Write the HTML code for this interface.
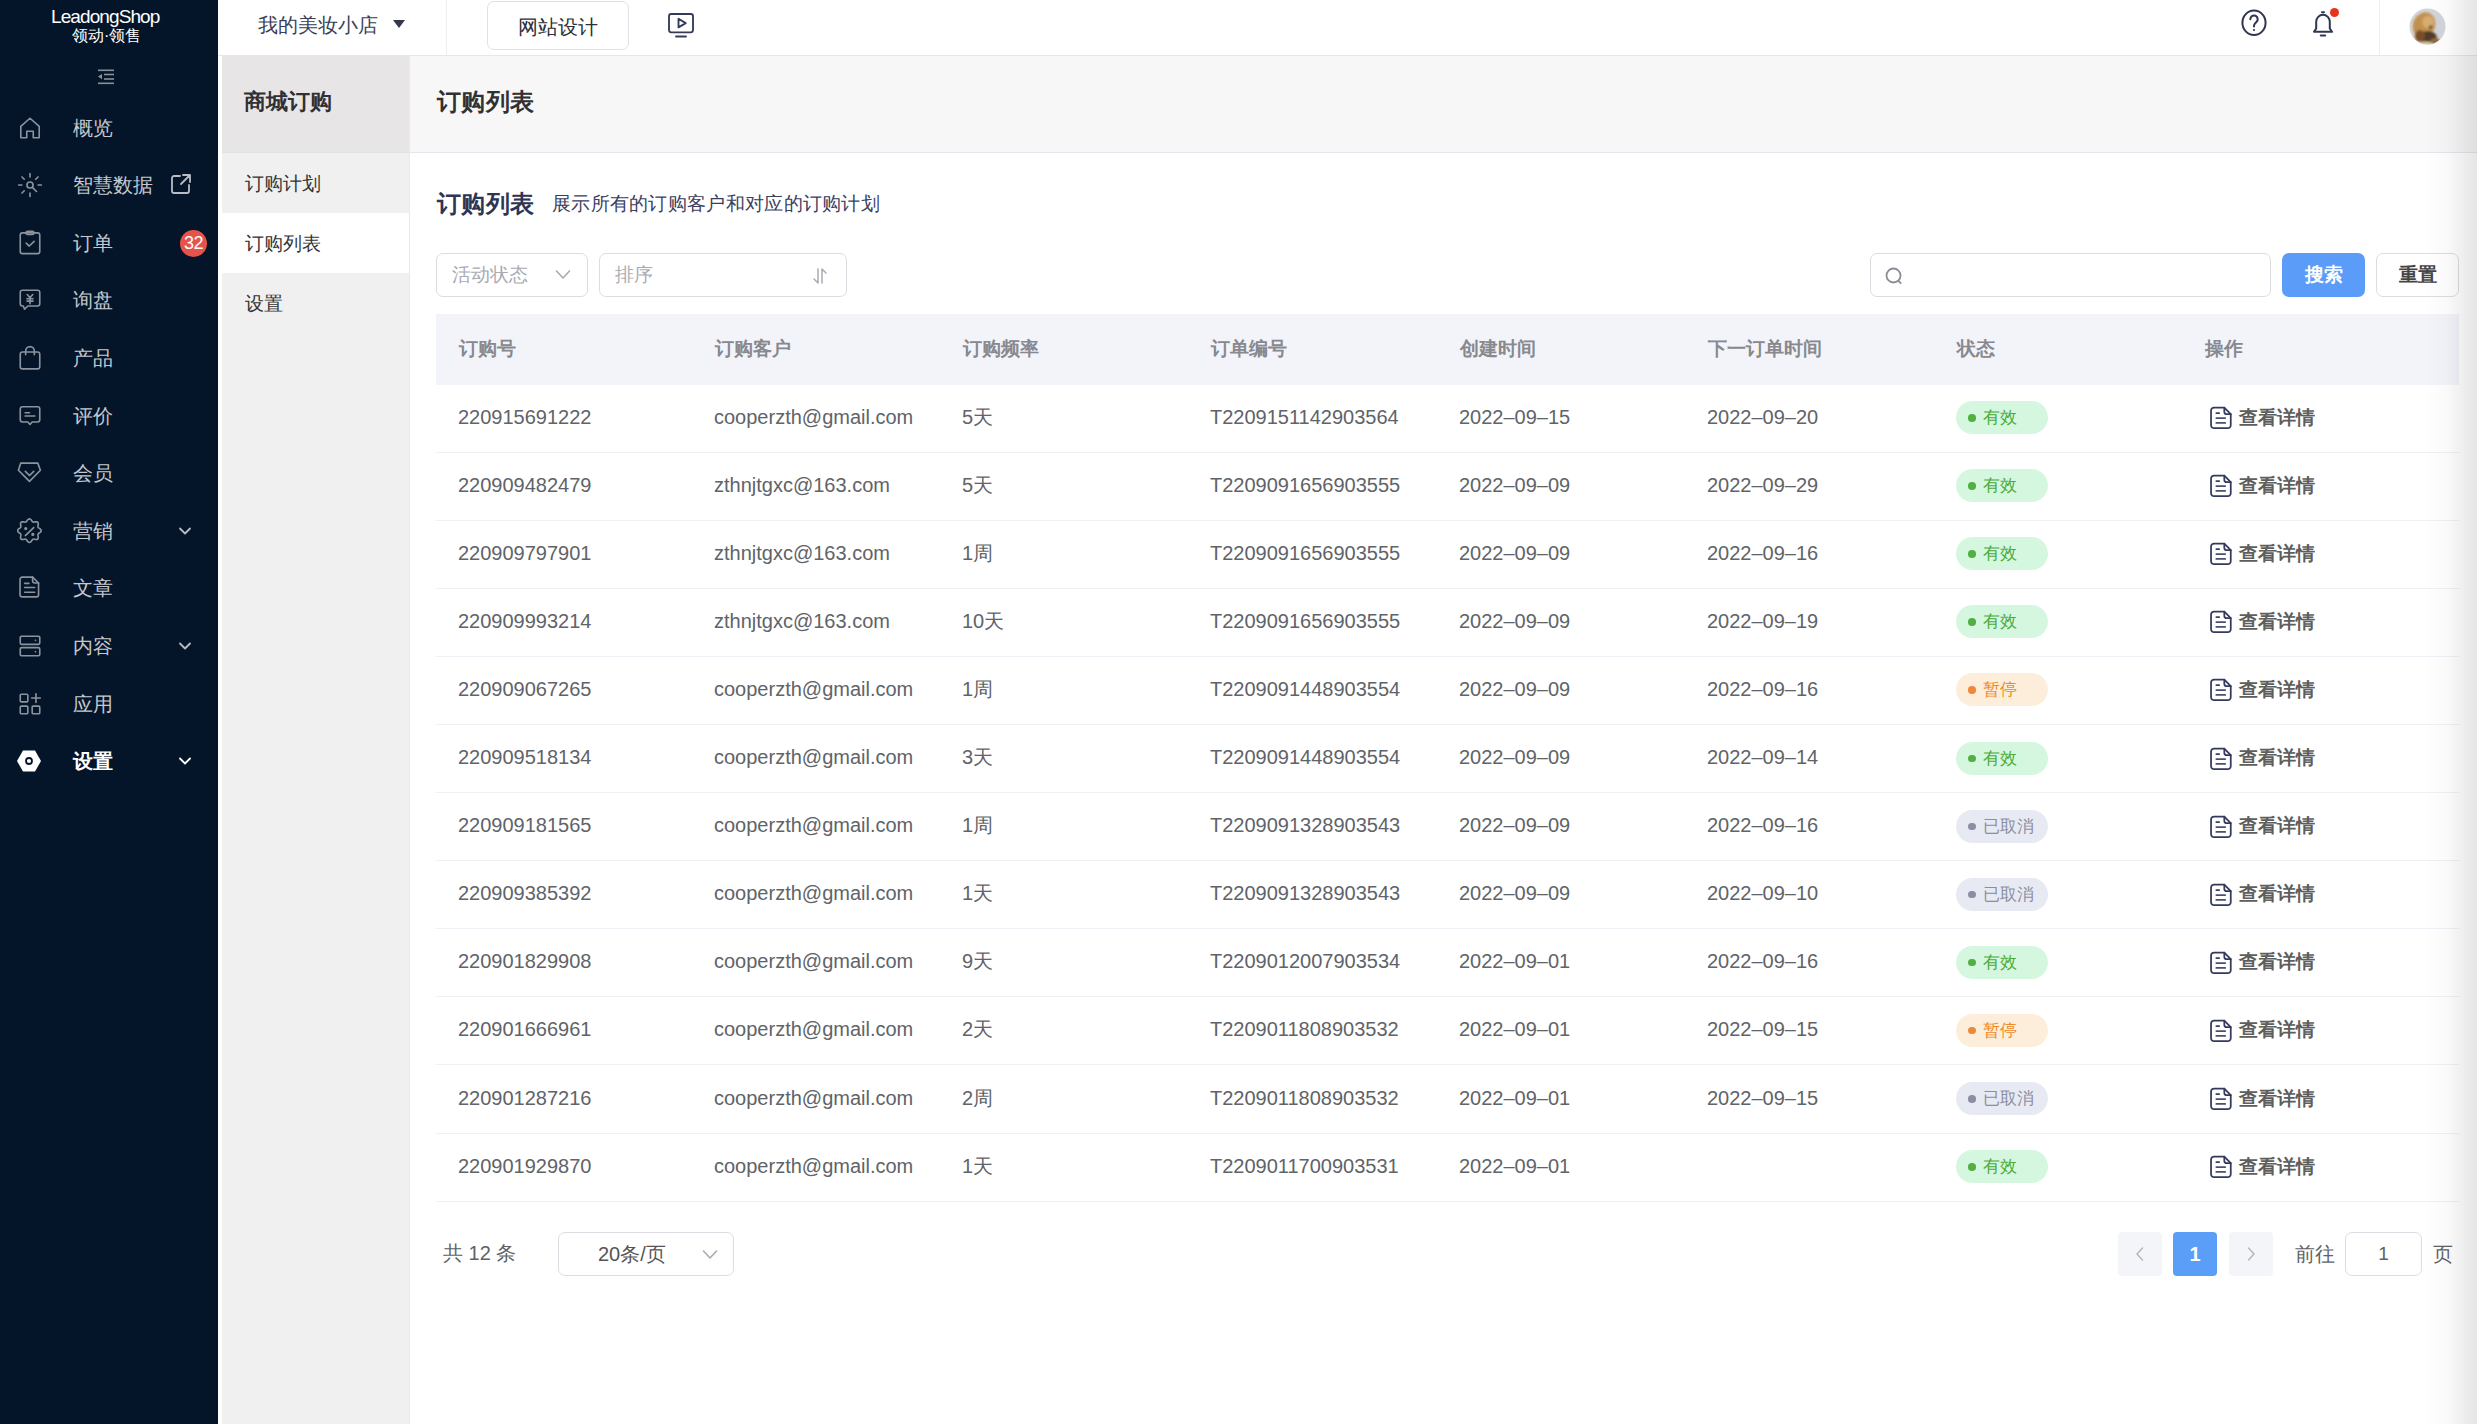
<!DOCTYPE html>
<html><head><meta charset="utf-8">
<style>
*{box-sizing:border-box;margin:0;padding:0}
html,body{width:2484px;height:1424px;overflow:hidden;background:#fff;font-family:"Liberation Sans",sans-serif;}
.abs{position:absolute}
#side{position:absolute;left:0;top:0;width:218px;height:1424px;background:#041529;}
#logo1{position:absolute;left:51px;top:5px;color:#fff;font-size:19px;letter-spacing:-0.9px;line-height:24px;white-space:nowrap}
#logo2{position:absolute;left:72px;top:26px;color:#fff;font-size:16px;line-height:20px;white-space:nowrap}
#collapse{position:absolute;left:97px;top:69px}
.mi{position:absolute;left:0;width:218px;height:40px;}
.mi .ic{position:absolute;left:17px;top:7px;width:26px;height:26px}
.mi .lb{position:absolute;left:73px;top:0;line-height:40px;font-size:20px;color:#c5c8ce;white-space:nowrap}
.mi.act .lb{color:#fff;font-weight:bold}
.mi.act .ic{left:16px;top:7px}
.mi .ext{position:absolute;left:169px;top:7px}
.mi .badge{position:absolute;left:180px;top:7px;width:27px;height:27px;border-radius:50%;background:#e5534b;color:#fff;font-size:18px;line-height:27px;text-align:center;letter-spacing:-0.5px}
.mi .chev{position:absolute;left:177px;top:12px}
#top{position:absolute;left:218px;top:0;width:2266px;height:56px;background:#fff;border-bottom:1px solid #e6e7ec}
#shop{position:absolute;left:258px;top:9px;font-size:20px;line-height:32px;color:#3a3f55;white-space:nowrap}
#shoptri{position:absolute;left:393px;top:20px;width:0;height:0;border-left:6px solid transparent;border-right:6px solid transparent;border-top:8px solid #33384f}
#div1{position:absolute;left:446px;top:0;width:1px;height:55px;background:#eceef2}
#design{position:absolute;left:487px;top:1px;width:142px;height:49px;border:1px solid #dfe1e8;border-radius:7px;font-size:20px;line-height:50px;text-align:center;color:#2b2f3a}
#tv{position:absolute;left:666px;top:11px}
#help{position:absolute;left:2239px;top:8px}
#bell{position:absolute;left:2309px;top:8px}
#reddot{position:absolute;left:2330px;top:8px;width:9px;height:9px;border-radius:50%;background:#e8321e}
#div2{position:absolute;left:2379px;top:0;width:1px;height:55px;background:#eceef2}
#avatar{position:absolute;left:2410px;top:8px;width:36px;height:36px;border-radius:50%;background:radial-gradient(circle at 55% 45%,#c99a52 0%,#a87434 35%,#6d4a26 60%,#c4b8a8 85%);}
#sub{position:absolute;left:222px;top:56px;width:188px;height:1368px;background:#f0f0f0;border-right:1px solid #e9eaef}
#subhead{position:absolute;left:0;top:0;width:187px;height:97px;background:#e7e5e6;border-bottom:1px solid #e1e2e8}
#subhead span{position:absolute;left:22px;top:28px;font-size:22px;line-height:36px;font-weight:bold;color:#2f3033}
.si{position:absolute;left:0;width:187px;height:60px;font-size:19px;line-height:62px;color:#333;padding-left:23px}
#sw{position:absolute;left:218px;top:56px;width:4px;height:1368px;background:#fff}
#phead{position:absolute;left:410px;top:56px;width:2074px;height:97px;background:#f7f7f7;border-bottom:1px solid #e4e6ee}
#phead span{position:absolute;left:26.5px;top:28px;font-size:24px;line-height:36px;font-weight:bold;color:#303133;letter-spacing:0.6px}
#ctitle{position:absolute;left:436.5px;top:186px;font-size:24px;line-height:36px;font-weight:bold;color:#2e3454;white-space:nowrap;letter-spacing:0.6px}
#csub{position:absolute;left:552px;top:188px;font-size:19px;line-height:32px;color:#3b4060;white-space:nowrap;letter-spacing:0.3px}
.sel{position:absolute;top:253px;height:44px;border:1px solid #dcdde3;border-radius:7px;background:#fff}
.sel span{position:absolute;left:15px;top:0;line-height:42px;font-size:19px;color:#a9abb2;white-space:nowrap}
#search{position:absolute;left:1870px;top:253px;width:401px;height:44px;border:1px solid #dcdde3;border-radius:7px}
#sbtn{position:absolute;left:2282px;top:253px;width:83px;height:44px;border-radius:7px;background:#5a9cf8;color:#fff;font-weight:bold;font-size:19px;line-height:44px;text-align:center}
#rbtn{position:absolute;left:2376px;top:253px;width:83px;height:44px;border-radius:7px;border:1px solid #dcdde3;color:#444;font-weight:bold;font-size:19px;line-height:42px;text-align:center}
#table{position:absolute;left:436px;top:314px;width:2023px;height:890px}
#thead{position:absolute;left:0;top:0;width:2023px;height:70.5px;background:#f3f4f9}
.th{position:absolute;top:0;line-height:70px;font-size:19px;font-weight:bold;color:#87898f;white-space:nowrap}
.tr{position:absolute;left:436px;width:2023px;height:68.1px;border-bottom:1px solid #f0f1f6}
.td{position:absolute;top:-1px;line-height:66px;font-size:20px;color:#606368;white-space:nowrap}
.pill{position:absolute;top:16.5px;width:92px;height:33px;border-radius:17px;font-size:16.5px;font-weight:500;line-height:33px;padding-left:27px;white-space:nowrap}
.pill i{position:absolute;left:12px;top:13px;width:7.5px;height:7.5px;border-radius:50%}
.s-ok{background:#d6f7df;color:#4bac3a}
.s-ok i{background:#52b043}
.s-pause{background:#fdeedb;color:#ee8a2c}
.s-pause i{background:#f0883a}
.s-cancel{background:#e8eaf3;color:#8a8fa3}
.s-cancel i{background:#8a8fa3}
.opx{position:absolute;top:0;height:66px;white-space:nowrap}
.opx svg{position:absolute;left:2px;top:19.5px}
.opx b{position:absolute;left:35px;top:0;line-height:66px;font-size:19px;color:#5e5e5e;font-weight:bold}
#total{position:absolute;left:443px;top:1237px;font-size:20px;line-height:32px;color:#606266;white-space:nowrap}
#psel{position:absolute;left:558px;top:1232px;width:176px;height:44px;border:1px solid #dcdde3;border-radius:7px}
#psel span{position:absolute;left:39px;top:0;line-height:42px;font-size:20px;color:#555;white-space:nowrap}
.pg{position:absolute;top:1232px;width:44px;height:44px;border-radius:4px;background:#f4f5f9;text-align:center}
#pgact{background:#5b9ef8;color:#fff;font-weight:bold;font-size:20px;line-height:44px}
#goto{position:absolute;left:2295px;top:1238px;font-size:20px;line-height:32px;color:#606266;white-space:nowrap}
#ginput{position:absolute;left:2345px;top:1232px;width:77px;height:44px;border:1px solid #dcdde3;border-radius:7px;text-align:center;font-size:19px;line-height:42px;color:#606266}
#gpage{position:absolute;left:2433px;top:1238px;font-size:20px;line-height:32px;color:#606266}
#shade{position:absolute;left:2425px;top:0;width:52px;height:1424px;background:linear-gradient(to right,rgba(0,0,0,0) 0%,rgba(0,0,0,0.02) 40%,rgba(0,0,0,0.10) 100%)}
#wedge{position:absolute;left:2477px;top:0;width:7px;height:1424px;background:#fff}
</style></head><body>
<div id="side">
 <div id="logo1">LeadongShop</div>
 <div id="logo2">领动·领售</div>
 <svg id="collapse" width="18" height="16" viewBox="0 0 18 16" fill="#8a9099"><rect x="1" y="0.5" width="16" height="1.6"/><rect x="7" y="4.7" width="10" height="1.6"/><rect x="7" y="9.2" width="10" height="1.6"/><rect x="1" y="13.5" width="16" height="1.6"/><path d="M1 7.6L5 5v5.2z"/></svg>
<div class="mi" style="top:107.6px">
<span class="ic"><svg width="26" height="26" viewBox="0 0 24 24" fill="none" stroke="#8d939c" stroke-width="1.5" stroke-linecap="round" stroke-linejoin="round"><path d="M3.5 10.5L12 3l8.5 7.5V21h-5.5v-6h-6v6H3.5z"/></svg></span><span class="lb">概览</span>
</div>
<div class="mi" style="top:165.2px">
<span class="ic"><svg width="26" height="26" viewBox="0 0 24 24" fill="none" stroke="#8d939c" stroke-width="1.5" stroke-linecap="round" stroke-linejoin="round"><circle cx="12" cy="12" r="2.8"/><path d="M14.2 14.2l3.8 3.8M12 1.5v3M12 19.5v3M1.5 12h3M19.5 12h3M4.6 4.6l2.1 2.1M19.4 4.6l-2.1 2.1M4.6 19.4l2.1-2.1"/></svg></span><span class="lb">智慧数据</span>
<span class="ext"><svg width="24" height="24" viewBox="0 0 24 24" fill="none" stroke="#b9bcc2" stroke-width="1.8" stroke-linecap="round" stroke-linejoin="round"><path d="M11 4H5a2 2 0 0 0-2 2v13a2 2 0 0 0 2 2h13a2 2 0 0 0 2-2v-6"/><path d="M14 3h7v7M21 3l-9 9"/></svg></span>
</div>
<div class="mi" style="top:222.8px">
<span class="ic"><svg width="26" height="26" viewBox="0 0 24 24" fill="none" stroke="#8d939c" stroke-width="1.5" stroke-linecap="round" stroke-linejoin="round"><rect x="3" y="2.6" width="18" height="19.2" rx="2"/><rect x="8.3" y="1.2" width="7.4" height="3" rx="1.5"/><path d="M8.5 12.2l2.8 2.6 4.5-4.3"/></svg></span><span class="lb">订单</span>
<span class="badge">32</span>
</div>
<div class="mi" style="top:280.4px">
<span class="ic"><svg width="26" height="26" viewBox="0 0 24 24" fill="none" stroke="#8d939c" stroke-width="1.5" stroke-linecap="round" stroke-linejoin="round"><path d="M5 3h14a2 2 0 0 1 2 2v10.5a2 2 0 0 1-2 2H10l-3 3-1.2-3H5a2 2 0 0 1-2-2V5a2 2 0 0 1 2-2z"/><path d="M9.5 7l2.5 3 2.5-3M9.2 10.8h5.6M9.2 13h5.6M12 10v5.5"/></svg></span><span class="lb">询盘</span>
</div>
<div class="mi" style="top:338.0px">
<span class="ic"><svg width="26" height="26" viewBox="0 0 24 24" fill="none" stroke="#8d939c" stroke-width="1.5" stroke-linecap="round" stroke-linejoin="round"><rect x="3" y="6.5" width="18" height="15.5" rx="2"/><path d="M8 9V5.5a4 4 0 0 1 8 0V9"/></svg></span><span class="lb">产品</span>
</div>
<div class="mi" style="top:395.6px">
<span class="ic"><svg width="26" height="26" viewBox="0 0 24 24" fill="none" stroke="#8d939c" stroke-width="1.5" stroke-linecap="round" stroke-linejoin="round"><path d="M5 3.5h14a2 2 0 0 1 2 2v10a2 2 0 0 1-2 2h-5L12 19.8 10 17.5H5a2 2 0 0 1-2-2v-10a2 2 0 0 1 2-2z"/><path d="M7.5 9h4M7.5 12h9"/></svg></span><span class="lb">评价</span>
</div>
<div class="mi" style="top:453.2px">
<span class="ic"><svg width="26" height="26" viewBox="0 0 24 24" fill="none" stroke="#8d939c" stroke-width="1.5" stroke-linecap="round" stroke-linejoin="round"><path d="M3.4 2.9H19.2L21.6 9.5 11.5 19.7 1.3 9.5z"/><path d="M7.7 10.5l3.85 3.85 3.85-3.85"/></svg></span><span class="lb">会员</span>
</div>
<div class="mi" style="top:510.8px">
<span class="ic"><svg width="26" height="26" viewBox="0 0 24 24" fill="none" stroke="#8d939c" stroke-width="1.5" stroke-linecap="round" stroke-linejoin="round"><path d="M11.45 0.80 L12.15 0.98 L12.80 1.46 L13.35 2.14 L13.82 2.84 L14.26 3.41 L14.74 3.75 L15.32 3.85 L16.04 3.75 L16.87 3.59 L17.74 3.51 L18.54 3.62 L19.16 3.99 L19.53 4.61 L19.64 5.41 L19.56 6.28 L19.40 7.11 L19.30 7.83 L19.40 8.41 L19.74 8.89 L20.31 9.33 L21.01 9.80 L21.69 10.35 L22.17 11.00 L22.35 11.70 L22.17 12.40 L21.69 13.05 L21.01 13.60 L20.31 14.07 L19.74 14.51 L19.40 14.99 L19.30 15.57 L19.40 16.29 L19.56 17.12 L19.64 17.99 L19.53 18.79 L19.16 19.41 L18.54 19.78 L17.74 19.89 L16.87 19.81 L16.04 19.65 L15.32 19.55 L14.74 19.65 L14.26 19.99 L13.82 20.56 L13.35 21.26 L12.80 21.94 L12.15 22.42 L11.45 22.60 L10.75 22.42 L10.10 21.94 L9.55 21.26 L9.08 20.56 L8.64 19.99 L8.16 19.65 L7.58 19.55 L6.86 19.65 L6.03 19.81 L5.16 19.89 L4.36 19.78 L3.74 19.41 L3.37 18.79 L3.26 17.99 L3.34 17.12 L3.50 16.29 L3.60 15.57 L3.50 14.99 L3.16 14.51 L2.59 14.07 L1.89 13.60 L1.21 13.05 L0.73 12.40 L0.55 11.70 L0.73 11.00 L1.21 10.35 L1.89 9.80 L2.59 9.33 L3.16 8.89 L3.50 8.41 L3.60 7.83 L3.50 7.11 L3.34 6.28 L3.26 5.41 L3.37 4.61 L3.74 3.99 L4.36 3.62 L5.16 3.51 L6.03 3.59 L6.86 3.75 L7.58 3.85 L8.16 3.75 L8.64 3.41 L9.08 2.84 L9.55 2.14 L10.10 1.46 L10.75 0.98z"/><path d="M7.7 16.2L15.4 8.9"/><circle cx="8.1" cy="9.8" r=".75" fill="#8d939c"/><circle cx="14.6" cy="15.2" r=".75" fill="#8d939c"/></svg></span><span class="lb">营销</span>
<span class="chev"><svg width="16" height="16" viewBox="0 0 16 16" fill="none" stroke="#b9bcc2" stroke-width="1.8" stroke-linecap="round" stroke-linejoin="round"><path d="M3 5.5l5 5 5-5"/></svg></span>
</div>
<div class="mi" style="top:568.4px">
<span class="ic"><svg width="26" height="26" viewBox="0 0 24 24" fill="none" stroke="#8d939c" stroke-width="1.5" stroke-linecap="round" stroke-linejoin="round"><path d="M4.8 2h9.6L19.9 7.4V18.2a2 2 0 0 1-2 2H4.8a2 2 0 0 1-2-2V4a2 2 0 0 1 2-2z"/><path d="M14.4 2V5.4a2 2 0 0 0 2 2H19.9"/><path d="M7.1 7.7h3.9M7.1 11.5h9.2M7.1 15.9h9.2"/></svg></span><span class="lb">文章</span>
</div>
<div class="mi" style="top:626.0px">
<span class="ic"><svg width="26" height="26" viewBox="0 0 24 24" fill="none" stroke="#8d939c" stroke-width="1.5" stroke-linecap="round" stroke-linejoin="round"><rect x="3" y="3" width="18" height="7.5" rx="1.2"/><rect x="3" y="13.5" width="18" height="7.5" rx="1.2"/><path d="M17 6.8h.1M17 17.2h.1"/></svg></span><span class="lb">内容</span>
<span class="chev"><svg width="16" height="16" viewBox="0 0 16 16" fill="none" stroke="#b9bcc2" stroke-width="1.8" stroke-linecap="round" stroke-linejoin="round"><path d="M3 5.5l5 5 5-5"/></svg></span>
</div>
<div class="mi" style="top:683.6px">
<span class="ic"><svg width="26" height="26" viewBox="0 0 24 24" fill="none" stroke="#8d939c" stroke-width="1.5" stroke-linecap="round" stroke-linejoin="round"><rect x="3" y="3" width="7" height="7" rx="1"/><rect x="3" y="14" width="7" height="7" rx="1"/><rect x="14" y="14" width="7" height="7" rx="1"/><path d="M17.5 2.5v8M13.5 6.5h8"/></svg></span><span class="lb">应用</span>
</div>
<div class="mi act" style="top:741.2px">
<span class="ic"><svg width="26" height="26" viewBox="0 0 26 26"><path d="M7 2.5h12l6 10.5-6 10.5H7L1 13z" fill="#fff"/><circle cx="13" cy="13" r="3" fill="none" stroke="#041529" stroke-width="1.8"/></svg></span><span class="lb">设置</span>
<span class="chev"><svg width="16" height="16" viewBox="0 0 16 16" fill="none" stroke="#ffffff" stroke-width="1.8" stroke-linecap="round" stroke-linejoin="round"><path d="M3 5.5l5 5 5-5"/></svg></span>
</div>
</div>
<div id="top">
</div>
<div id="shop">我的美妆小店</div>
<div id="shoptri"></div>
<div id="div1"></div>
<div id="design">网站设计</div>
<svg id="tv" width="30" height="28" viewBox="0 0 30 28" fill="none" stroke="#353b57" stroke-width="1.85" stroke-linecap="round" stroke-linejoin="round"><rect x="3" y="3" width="24" height="18.3" rx="2.2"/><path d="M12.5 7.8v8.6l7.2-4.3z"/><path d="M10 25.5h10"/></svg>
<svg id="help" width="30" height="30" viewBox="0 0 30 30" fill="none" stroke="#30364f" stroke-width="2" stroke-linecap="round"><ellipse cx="15" cy="14.8" rx="11.6" ry="12.2"/><path d="M11.3 11.2a3.7 3.7 0 1 1 6.3 2.6c-1.3 1.3-2.4 2-2.6 3.8v.9"/><circle cx="15" cy="22" r="1.1" fill="#30364f" stroke="none"/></svg>
<svg id="bell" width="28" height="30" viewBox="0 0 28 30" fill="none" stroke="#30364f" stroke-width="2" stroke-linecap="round" stroke-linejoin="round"><path d="M13 4.2h2"/><path d="M7.2 20.5V13.8a6.8 7 0 0 1 13.6 0V20.5l2.2 3.3H5z"/><path d="M11.8 27.5h4.4"/></svg>
<div id="reddot"></div>
<div id="div2"></div>
<svg id="avatar2" style="position:absolute;left:2409px;top:8px" width="37" height="37" viewBox="0 0 37 37"><defs><clipPath id="cav"><circle cx="18.5" cy="18.5" r="18"/></clipPath><filter id="fb"><feGaussianBlur stdDeviation="0.9"/></filter></defs><g clip-path="url(#cav)"><rect width="37" height="37" fill="#d3d5da"/><g filter="url(#fb)"><ellipse cx="15" cy="17" rx="11" ry="13" transform="rotate(25 15 17)" fill="#c3914f"/><ellipse cx="19" cy="14" rx="6" ry="6" fill="#d6ad6e"/><ellipse cx="19" cy="30" rx="9" ry="7" fill="#4f3a2a"/><ellipse cx="11" cy="28" rx="5" ry="6" fill="#7a4e2c"/><ellipse cx="26" cy="33" rx="5" ry="3" fill="#8e6a3e"/><ellipse cx="16" cy="36" rx="8" ry="2.5" fill="#d9c9a0"/><circle cx="21.5" cy="19" r="1.5" fill="#2c2520"/></g></g></svg>
<div id="sw"></div>
<div id="sub">
 <div id="subhead"><span>商城订购</span></div>
 <div class="si" style="top:97px">订购计划</div>
 <div class="si" style="top:157px;background:#fff">订购列表</div>
 <div class="si" style="top:217px">设置</div>
</div>
<div id="phead"><span>订购列表</span></div>
<div id="ctitle">订购列表</div>
<div id="csub">展示所有的订购客户和对应的订购计划</div>
<div class="sel" style="left:436px;width:152px"><span>活动状态</span>
 <svg style="position:absolute;left:118px;top:15px" width="16" height="12" viewBox="0 0 16 12" fill="none" stroke="#a9abb2" stroke-width="1.6" stroke-linecap="round" stroke-linejoin="round"><path d="M1.5 2l6.5 7 6.5-7"/></svg></div>
<div class="sel" style="left:599px;width:248px"><span>排序</span>
 <svg style="position:absolute;left:212px;top:13px" width="16" height="18" viewBox="0 0 16 18" fill="none" stroke="#a9abb2" stroke-width="1.5" stroke-linecap="round" stroke-linejoin="round"><path d="M6 2v14L2 12M10 16V2l4 4"/></svg></div>
<div id="search"><svg style="position:absolute;left:14px;top:13px" width="20" height="19" viewBox="0 0 20 19" fill="none" stroke="#8a8d98" stroke-width="1.8" stroke-linecap="round"><circle cx="8.5" cy="8.5" r="7"/><path d="M13.5 13.8l2.2 2.4"/></svg></div>
<div id="sbtn">搜索</div>
<div id="rbtn">重置</div>
<div id="table"><div id="thead">
<span class="th" style="left:23px">订购号</span>
<span class="th" style="left:279px">订购客户</span>
<span class="th" style="left:527px">订购频率</span>
<span class="th" style="left:775px">订单编号</span>
<span class="th" style="left:1024px">创建时间</span>
<span class="th" style="left:1272px">下一订单时间</span>
<span class="th" style="left:1521px">状态</span>
<span class="th" style="left:1769px">操作</span>
</div></div>
<div class="tr" style="top:384.5px">
<span class="td" style="left:22px">220915691222</span>
<span class="td" style="left:278px">cooperzth@gmail.com</span>
<span class="td" style="left:526px">5天</span>
<span class="td" style="left:774px">T2209151142903564</span>
<span class="td" style="left:1023px">2022–09–15</span>
<span class="td" style="left:1271px">2022–09–20</span>
<span class="pill s-ok" style="left:1520px"><i></i>有效</span>
<span class="opx" style="left:1768px"><svg width="28" height="28" viewBox="0 0 28 28" fill="none" stroke="#333a5c" stroke-width="1.75" stroke-linejoin="round" stroke-linecap="round"><path d="M5.05 6.6a3 3 0 0 1 3-3H18.3L24.75 10.2V21.2a3 3 0 0 1-3 3H8.05a3 3 0 0 1-3-3z"/><path d="M18.3 3.6V7.7a2.5 2.5 0 0 0 2.5 2.5H24.75"/><path d="M10.3 9.1h2.9" stroke="#3a405f"/><path d="M10.3 14.1h8.9M10.3 18.9h8.9" stroke="#4a5070"/></svg><b>查看详情</b></span>
</div>
<div class="tr" style="top:452.6px">
<span class="td" style="left:22px">220909482479</span>
<span class="td" style="left:278px">zthnjtgxc@163.com</span>
<span class="td" style="left:526px">5天</span>
<span class="td" style="left:774px">T2209091656903555</span>
<span class="td" style="left:1023px">2022–09–09</span>
<span class="td" style="left:1271px">2022–09–29</span>
<span class="pill s-ok" style="left:1520px"><i></i>有效</span>
<span class="opx" style="left:1768px"><svg width="28" height="28" viewBox="0 0 28 28" fill="none" stroke="#333a5c" stroke-width="1.75" stroke-linejoin="round" stroke-linecap="round"><path d="M5.05 6.6a3 3 0 0 1 3-3H18.3L24.75 10.2V21.2a3 3 0 0 1-3 3H8.05a3 3 0 0 1-3-3z"/><path d="M18.3 3.6V7.7a2.5 2.5 0 0 0 2.5 2.5H24.75"/><path d="M10.3 9.1h2.9" stroke="#3a405f"/><path d="M10.3 14.1h8.9M10.3 18.9h8.9" stroke="#4a5070"/></svg><b>查看详情</b></span>
</div>
<div class="tr" style="top:520.7px">
<span class="td" style="left:22px">220909797901</span>
<span class="td" style="left:278px">zthnjtgxc@163.com</span>
<span class="td" style="left:526px">1周</span>
<span class="td" style="left:774px">T2209091656903555</span>
<span class="td" style="left:1023px">2022–09–09</span>
<span class="td" style="left:1271px">2022–09–16</span>
<span class="pill s-ok" style="left:1520px"><i></i>有效</span>
<span class="opx" style="left:1768px"><svg width="28" height="28" viewBox="0 0 28 28" fill="none" stroke="#333a5c" stroke-width="1.75" stroke-linejoin="round" stroke-linecap="round"><path d="M5.05 6.6a3 3 0 0 1 3-3H18.3L24.75 10.2V21.2a3 3 0 0 1-3 3H8.05a3 3 0 0 1-3-3z"/><path d="M18.3 3.6V7.7a2.5 2.5 0 0 0 2.5 2.5H24.75"/><path d="M10.3 9.1h2.9" stroke="#3a405f"/><path d="M10.3 14.1h8.9M10.3 18.9h8.9" stroke="#4a5070"/></svg><b>查看详情</b></span>
</div>
<div class="tr" style="top:588.8px">
<span class="td" style="left:22px">220909993214</span>
<span class="td" style="left:278px">zthnjtgxc@163.com</span>
<span class="td" style="left:526px">10天</span>
<span class="td" style="left:774px">T2209091656903555</span>
<span class="td" style="left:1023px">2022–09–09</span>
<span class="td" style="left:1271px">2022–09–19</span>
<span class="pill s-ok" style="left:1520px"><i></i>有效</span>
<span class="opx" style="left:1768px"><svg width="28" height="28" viewBox="0 0 28 28" fill="none" stroke="#333a5c" stroke-width="1.75" stroke-linejoin="round" stroke-linecap="round"><path d="M5.05 6.6a3 3 0 0 1 3-3H18.3L24.75 10.2V21.2a3 3 0 0 1-3 3H8.05a3 3 0 0 1-3-3z"/><path d="M18.3 3.6V7.7a2.5 2.5 0 0 0 2.5 2.5H24.75"/><path d="M10.3 9.1h2.9" stroke="#3a405f"/><path d="M10.3 14.1h8.9M10.3 18.9h8.9" stroke="#4a5070"/></svg><b>查看详情</b></span>
</div>
<div class="tr" style="top:656.9px">
<span class="td" style="left:22px">220909067265</span>
<span class="td" style="left:278px">cooperzth@gmail.com</span>
<span class="td" style="left:526px">1周</span>
<span class="td" style="left:774px">T2209091448903554</span>
<span class="td" style="left:1023px">2022–09–09</span>
<span class="td" style="left:1271px">2022–09–16</span>
<span class="pill s-pause" style="left:1520px"><i></i>暂停</span>
<span class="opx" style="left:1768px"><svg width="28" height="28" viewBox="0 0 28 28" fill="none" stroke="#333a5c" stroke-width="1.75" stroke-linejoin="round" stroke-linecap="round"><path d="M5.05 6.6a3 3 0 0 1 3-3H18.3L24.75 10.2V21.2a3 3 0 0 1-3 3H8.05a3 3 0 0 1-3-3z"/><path d="M18.3 3.6V7.7a2.5 2.5 0 0 0 2.5 2.5H24.75"/><path d="M10.3 9.1h2.9" stroke="#3a405f"/><path d="M10.3 14.1h8.9M10.3 18.9h8.9" stroke="#4a5070"/></svg><b>查看详情</b></span>
</div>
<div class="tr" style="top:725.0px">
<span class="td" style="left:22px">220909518134</span>
<span class="td" style="left:278px">cooperzth@gmail.com</span>
<span class="td" style="left:526px">3天</span>
<span class="td" style="left:774px">T2209091448903554</span>
<span class="td" style="left:1023px">2022–09–09</span>
<span class="td" style="left:1271px">2022–09–14</span>
<span class="pill s-ok" style="left:1520px"><i></i>有效</span>
<span class="opx" style="left:1768px"><svg width="28" height="28" viewBox="0 0 28 28" fill="none" stroke="#333a5c" stroke-width="1.75" stroke-linejoin="round" stroke-linecap="round"><path d="M5.05 6.6a3 3 0 0 1 3-3H18.3L24.75 10.2V21.2a3 3 0 0 1-3 3H8.05a3 3 0 0 1-3-3z"/><path d="M18.3 3.6V7.7a2.5 2.5 0 0 0 2.5 2.5H24.75"/><path d="M10.3 9.1h2.9" stroke="#3a405f"/><path d="M10.3 14.1h8.9M10.3 18.9h8.9" stroke="#4a5070"/></svg><b>查看详情</b></span>
</div>
<div class="tr" style="top:793.1px">
<span class="td" style="left:22px">220909181565</span>
<span class="td" style="left:278px">cooperzth@gmail.com</span>
<span class="td" style="left:526px">1周</span>
<span class="td" style="left:774px">T2209091328903543</span>
<span class="td" style="left:1023px">2022–09–09</span>
<span class="td" style="left:1271px">2022–09–16</span>
<span class="pill s-cancel" style="left:1520px"><i></i>已取消</span>
<span class="opx" style="left:1768px"><svg width="28" height="28" viewBox="0 0 28 28" fill="none" stroke="#333a5c" stroke-width="1.75" stroke-linejoin="round" stroke-linecap="round"><path d="M5.05 6.6a3 3 0 0 1 3-3H18.3L24.75 10.2V21.2a3 3 0 0 1-3 3H8.05a3 3 0 0 1-3-3z"/><path d="M18.3 3.6V7.7a2.5 2.5 0 0 0 2.5 2.5H24.75"/><path d="M10.3 9.1h2.9" stroke="#3a405f"/><path d="M10.3 14.1h8.9M10.3 18.9h8.9" stroke="#4a5070"/></svg><b>查看详情</b></span>
</div>
<div class="tr" style="top:861.2px">
<span class="td" style="left:22px">220909385392</span>
<span class="td" style="left:278px">cooperzth@gmail.com</span>
<span class="td" style="left:526px">1天</span>
<span class="td" style="left:774px">T2209091328903543</span>
<span class="td" style="left:1023px">2022–09–09</span>
<span class="td" style="left:1271px">2022–09–10</span>
<span class="pill s-cancel" style="left:1520px"><i></i>已取消</span>
<span class="opx" style="left:1768px"><svg width="28" height="28" viewBox="0 0 28 28" fill="none" stroke="#333a5c" stroke-width="1.75" stroke-linejoin="round" stroke-linecap="round"><path d="M5.05 6.6a3 3 0 0 1 3-3H18.3L24.75 10.2V21.2a3 3 0 0 1-3 3H8.05a3 3 0 0 1-3-3z"/><path d="M18.3 3.6V7.7a2.5 2.5 0 0 0 2.5 2.5H24.75"/><path d="M10.3 9.1h2.9" stroke="#3a405f"/><path d="M10.3 14.1h8.9M10.3 18.9h8.9" stroke="#4a5070"/></svg><b>查看详情</b></span>
</div>
<div class="tr" style="top:929.3px">
<span class="td" style="left:22px">220901829908</span>
<span class="td" style="left:278px">cooperzth@gmail.com</span>
<span class="td" style="left:526px">9天</span>
<span class="td" style="left:774px">T2209012007903534</span>
<span class="td" style="left:1023px">2022–09–01</span>
<span class="td" style="left:1271px">2022–09–16</span>
<span class="pill s-ok" style="left:1520px"><i></i>有效</span>
<span class="opx" style="left:1768px"><svg width="28" height="28" viewBox="0 0 28 28" fill="none" stroke="#333a5c" stroke-width="1.75" stroke-linejoin="round" stroke-linecap="round"><path d="M5.05 6.6a3 3 0 0 1 3-3H18.3L24.75 10.2V21.2a3 3 0 0 1-3 3H8.05a3 3 0 0 1-3-3z"/><path d="M18.3 3.6V7.7a2.5 2.5 0 0 0 2.5 2.5H24.75"/><path d="M10.3 9.1h2.9" stroke="#3a405f"/><path d="M10.3 14.1h8.9M10.3 18.9h8.9" stroke="#4a5070"/></svg><b>查看详情</b></span>
</div>
<div class="tr" style="top:997.4px">
<span class="td" style="left:22px">220901666961</span>
<span class="td" style="left:278px">cooperzth@gmail.com</span>
<span class="td" style="left:526px">2天</span>
<span class="td" style="left:774px">T2209011808903532</span>
<span class="td" style="left:1023px">2022–09–01</span>
<span class="td" style="left:1271px">2022–09–15</span>
<span class="pill s-pause" style="left:1520px"><i></i>暂停</span>
<span class="opx" style="left:1768px"><svg width="28" height="28" viewBox="0 0 28 28" fill="none" stroke="#333a5c" stroke-width="1.75" stroke-linejoin="round" stroke-linecap="round"><path d="M5.05 6.6a3 3 0 0 1 3-3H18.3L24.75 10.2V21.2a3 3 0 0 1-3 3H8.05a3 3 0 0 1-3-3z"/><path d="M18.3 3.6V7.7a2.5 2.5 0 0 0 2.5 2.5H24.75"/><path d="M10.3 9.1h2.9" stroke="#3a405f"/><path d="M10.3 14.1h8.9M10.3 18.9h8.9" stroke="#4a5070"/></svg><b>查看详情</b></span>
</div>
<div class="tr" style="top:1065.5px">
<span class="td" style="left:22px">220901287216</span>
<span class="td" style="left:278px">cooperzth@gmail.com</span>
<span class="td" style="left:526px">2周</span>
<span class="td" style="left:774px">T2209011808903532</span>
<span class="td" style="left:1023px">2022–09–01</span>
<span class="td" style="left:1271px">2022–09–15</span>
<span class="pill s-cancel" style="left:1520px"><i></i>已取消</span>
<span class="opx" style="left:1768px"><svg width="28" height="28" viewBox="0 0 28 28" fill="none" stroke="#333a5c" stroke-width="1.75" stroke-linejoin="round" stroke-linecap="round"><path d="M5.05 6.6a3 3 0 0 1 3-3H18.3L24.75 10.2V21.2a3 3 0 0 1-3 3H8.05a3 3 0 0 1-3-3z"/><path d="M18.3 3.6V7.7a2.5 2.5 0 0 0 2.5 2.5H24.75"/><path d="M10.3 9.1h2.9" stroke="#3a405f"/><path d="M10.3 14.1h8.9M10.3 18.9h8.9" stroke="#4a5070"/></svg><b>查看详情</b></span>
</div>
<div class="tr" style="top:1133.6px">
<span class="td" style="left:22px">220901929870</span>
<span class="td" style="left:278px">cooperzth@gmail.com</span>
<span class="td" style="left:526px">1天</span>
<span class="td" style="left:774px">T2209011700903531</span>
<span class="td" style="left:1023px">2022–09–01</span>
<span class="td" style="left:1271px"></span>
<span class="pill s-ok" style="left:1520px"><i></i>有效</span>
<span class="opx" style="left:1768px"><svg width="28" height="28" viewBox="0 0 28 28" fill="none" stroke="#333a5c" stroke-width="1.75" stroke-linejoin="round" stroke-linecap="round"><path d="M5.05 6.6a3 3 0 0 1 3-3H18.3L24.75 10.2V21.2a3 3 0 0 1-3 3H8.05a3 3 0 0 1-3-3z"/><path d="M18.3 3.6V7.7a2.5 2.5 0 0 0 2.5 2.5H24.75"/><path d="M10.3 9.1h2.9" stroke="#3a405f"/><path d="M10.3 14.1h8.9M10.3 18.9h8.9" stroke="#4a5070"/></svg><b>查看详情</b></span>
</div>
<div id="total">共 12 条</div>
<div id="psel"><span>20条/页</span><svg style="position:absolute;left:143px;top:16px" width="16" height="12" viewBox="0 0 16 12" fill="none" stroke="#a9abb2" stroke-width="1.6" stroke-linecap="round" stroke-linejoin="round"><path d="M1.5 2l6.5 7 6.5-7"/></svg></div>
<div class="pg" style="left:2118px"><svg style="position:absolute;left:16px;top:14px" width="12" height="16" viewBox="0 0 12 16" fill="none" stroke="#b5b7bd" stroke-width="1.5" stroke-linecap="round" stroke-linejoin="round"><path d="M8.5 2L3 8l5.5 6"/></svg></div>
<div class="pg" id="pgact" style="left:2173px">1</div>
<div class="pg" style="left:2229px"><svg style="position:absolute;left:16px;top:14px" width="12" height="16" viewBox="0 0 12 16" fill="none" stroke="#b5b7bd" stroke-width="1.5" stroke-linecap="round" stroke-linejoin="round"><path d="M3.5 2L9 8l-5.5 6"/></svg></div>
<div id="goto">前往</div>
<div id="ginput">1</div>
<div id="gpage">页</div>
<div id="shade"></div>
<div id="wedge"></div>
</body></html>
